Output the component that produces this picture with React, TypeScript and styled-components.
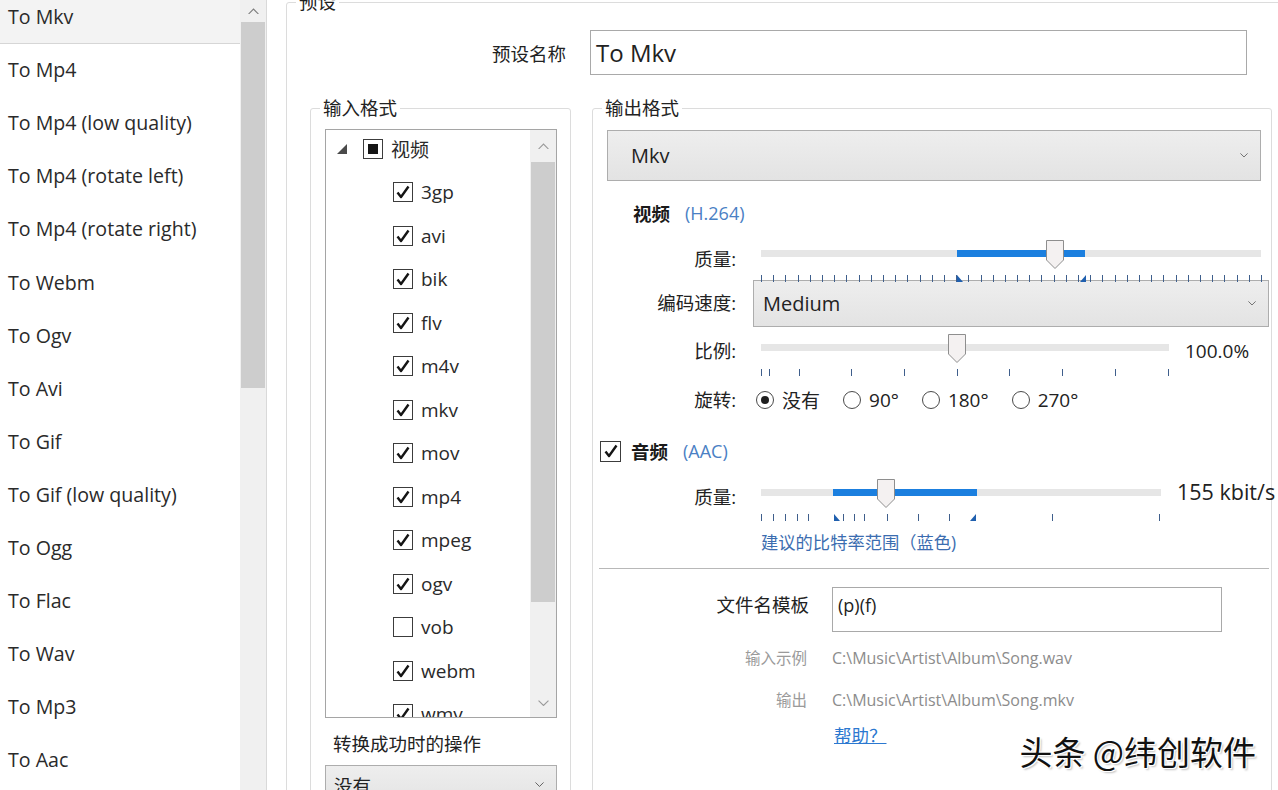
import styled, { createGlobalStyle } from "styled-components";

const GlobalStyle = createGlobalStyle`
  html, body {
    margin: 0;
    padding: 0;
    background: #fff;
    overflow: hidden;
  }
  body {
    font-family: "Open Sans", "Noto Sans CJK SC", sans-serif;
    color: #222;
  }
  * {
    box-sizing: border-box;
  }
`;

const Page = styled.div`
  position: relative;
  display: flex;
  width: 1278px;
  height: 790px;
  overflow: hidden;
`;

/* ---------- left preset list ---------- */

const Sidebar = styled.div`
  display: flex;
  flex: none;
  width: 267px;
  height: 790px;
  border-right: 1px solid #d9d9d9;
`;

const PresetList = styled.ul`
  list-style: none;
  margin: -9.5px 0 0;
  padding: 0;
  width: 240px;
  flex: none;
`;

const PresetItem = styled.li<{ $active?: boolean }>`
  display: flex;
  align-items: center;
  height: 53.1px;
  padding-left: 8px;
  font-size: 19.6px;
  color: #2a2a2a;
  white-space: nowrap;
  background: ${(p) => (p.$active ? "#f3f3f3" : "transparent")};
  border-bottom: 1px solid ${(p) => (p.$active ? "#d6d6d6" : "transparent")};
`;

const ScrollTrack = styled.div`
  display: flex;
  flex-direction: column;
  align-items: center;
  flex: none;
  width: 26px;
  background: #f0f0f0;
`;

const ScrollArrow = styled.div<{ $h: number }>`
  display: flex;
  align-items: center;
  justify-content: center;
  width: 100%;
  height: ${(p) => p.$h}px;
  flex: none;
  color: #8a8a8a;
`;

const ScrollThumb = styled.div<{ $h: number }>`
  width: 24px;
  height: ${(p) => p.$h}px;
  flex: none;
  background: #cdcdcd;
`;

const ScrollSpacer = styled.div`
  flex: 1;
`;

/* ---------- group boxes ---------- */

const Group = styled.fieldset<{ $w: number }>`
  flex: none;
  width: ${(p) => p.$w}px;
  min-width: 0;
  margin: 0;
  padding: 0;
  border: 1px solid #dcdcdc;
  border-radius: 3px;
`;

const MainGroup = styled(Group)`
  margin: -9px 0 0 19px;
  height: 840px;
`;

const GroupTitle = styled.legend`
  margin-left: 9px;
  padding: 0 3px;
  font-size: 18.5px;
  line-height: 22px;
  color: #222;
`;

const MainBody = styled.div`
  padding-top: 17px;
`;

const NameRow = styled.div`
  display: flex;
  align-items: center;
  gap: 24px;
`;

const NameLabel = styled.label`
  width: 279px;
  text-align: right;
  font-size: 18.5px;
`;

const TextBox = styled.div<{ $w: number; $h: number }>`
  width: ${(p) => p.$w}px;
  height: ${(p) => p.$h}px;
  border: 1px solid #a9a9a9;
  background: #fff;
`;

const NameInput = styled(TextBox)`
  display: flex;
  align-items: center;
  padding-left: 5px;
  font-size: 24px;
  color: #222;
`;

const Columns = styled.div`
  display: flex;
  align-items: flex-start;
  gap: 21px;
  margin-top: 22px;
  padding-left: 23px;
`;

const ColumnGroup = styled(Group)`
  height: 760px;
`;

/* ---------- input formats ---------- */

const InputBody = styled.div`
  padding: 10px 13px 0 14px;
`;

const ListBox = styled.div`
  display: flex;
  height: 589px;
  border: 1px solid #a5a5a5;
  overflow: hidden;
`;

const TreeArea = styled.div`
  flex: 1;
  overflow: hidden;
`;

const TreeInner = styled.div`
  margin-top: -3px;
`;

const TreeRow = styled.div<{ $indent: number }>`
  display: flex;
  align-items: center;
  height: 43.5px;
  padding-left: ${(p) => p.$indent}px;
  gap: 8px;
  font-size: 19px;
  color: #2a2a2a;
`;

const Expander = styled.svg`
  margin-right: 8px;
`;

const CheckBox = styled.span<{ $size?: number }>`
  display: inline-flex;
  align-items: center;
  justify-content: center;
  flex: none;
  width: ${(p) => p.$size ?? 20}px;
  height: ${(p) => p.$size ?? 20}px;
  border: 1px solid #3c3c3c;
  background: #fff;
`;

const Indeterminate = styled.span`
  width: 10px;
  height: 10px;
  background: #151515;
`;

const ActionLabel = styled.div`
  margin-top: 14px;
  padding-left: 8px;
  font-size: 18.5px;
  line-height: 24px;
`;

const DropDown = styled.div<{ $w: number; $h: number; $pl: number }>`
  display: flex;
  align-items: center;
  justify-content: space-between;
  flex: none;
  width: ${(p) => p.$w}px;
  height: ${(p) => p.$h}px;
  padding: 0 12px 0 ${(p) => p.$pl}px;
  border: 1px solid #adadad;
  background: linear-gradient(#eeeeee, #e3e3e3);
  font-size: 20px;
  color: #222;
`;

const ActionSelect = styled(DropDown)`
  margin-top: 9px;
  font-size: 18.5px;
`;

/* ---------- output format ---------- */

const OutputBody = styled.div`
  padding: 11px 10px 0 14px;
`;

const SectionHead = styled.div<{ $mt: number; $ml: number }>`
  display: flex;
  align-items: center;
  gap: 10px;
  height: 26px;
  margin-top: ${(p) => p.$mt}px;
  margin-left: ${(p) => p.$ml}px;
`;

const SectionTitle = styled.span`
  font-size: 18.5px;
  font-weight: 700;
  color: #1a1a1a;
`;

const Codec = styled.span`
  margin-left: 5px;
  font-size: 18px;
  color: #4a80c4;
`;

const FormRow = styled.div<{ $mt?: number; $gap?: number }>`
  display: flex;
  align-items: flex-start;
  gap: ${(p) => p.$gap ?? 17}px;
  margin-top: ${(p) => p.$mt ?? 0}px;
`;

const FieldLabel = styled.span<{ $mt?: number; $w?: number }>`
  flex: none;
  width: ${(p) => p.$w ?? 129}px;
  margin-top: ${(p) => p.$mt ?? 0}px;
  text-align: right;
  font-size: 18.5px;
  line-height: 26px;
  color: #222;
`;

const SideValue = styled.span<{ $mt: number; $size: number }>`
  margin: ${(p) => p.$mt}px 0 0 -9px;
  font-size: ${(p) => p.$size}px;
  line-height: 26px;
  white-space: nowrap;
`;

const SliderBox = styled.div<{ $w: number }>`
  position: relative;
  flex: none;
  width: ${(p) => p.$w + 16}px;
  height: 41px;
`;

const SliderTrack = styled.div`
  position: absolute;
  left: 8px;
  right: 8px;
  top: 11px;
  height: 7px;
  background: #e6e6e6;
`;

const SliderRange = styled.div`
  position: absolute;
  top: 0;
  bottom: 0;
  background: #1b7fdf;
`;

const SliderThumb = styled.svg`
  position: absolute;
  top: 0;
  margin-left: -10px;
`;

const Tick = styled.span`
  position: absolute;
  top: 36px;
  width: 1px;
  height: 7px;
  background: #3f5f8c;
`;

const TickMark = styled.svg`
  position: absolute;
  top: 36px;
`;

const RadioGroup = styled.div`
  display: flex;
  align-items: center;
  gap: 23px;
  height: 26px;
  margin-left: 3px;
`;

const RadioItem = styled.label`
  display: flex;
  align-items: center;
  gap: 8px;
  font-size: 19px;
  color: #222;
`;

const RadioDot = styled.span<{ $on?: boolean }>`
  display: inline-flex;
  align-items: center;
  justify-content: center;
  width: 18px;
  height: 18px;
  border-radius: 50%;
  border: 1px solid #4a4a4a;
  background: #fff;
  &::after {
    content: "";
    width: 8px;
    height: 8px;
    border-radius: 50%;
    background: ${(p) => (p.$on ? "#1e1e1e" : "transparent")};
  }
`;

const Hint = styled.div`
  margin-top: 11px;
  padding-left: 154px;
  font-size: 17.3px;
  line-height: 26px;
  color: #3c6db0;
`;

const Separator = styled.hr`
  margin: 12px -8px 0 -8px;
  border: 0;
  height: 1px;
  background: #b8b8b8;
`;

const TemplateInput = styled(TextBox)`
  padding: 4px 5px;
  font-size: 18px;
  line-height: 26px;
`;

const MutedLabel = styled(FieldLabel)`
  font-size: 15.5px;
  color: #9a9a9a;
`;

const PathText = styled.span`
  margin-left: 8px;
  font-size: 16px;
  line-height: 26px;
  color: #8c8c8c;
`;

const HelpLink = styled.a`
  display: block;
  margin-top: 9px;
  padding-left: 227px;
  font-size: 17.5px;
  line-height: 26px;
  color: #2b78d0;
  text-decoration: underline;
`;

const Watermark = styled.div`
  position: absolute;
  right: 22px;
  top: 727px;
  font-family: "Noto Sans CJK SC", sans-serif;
  font-size: 33px;
  color: #111;
  text-shadow: 1px 1px 0 #fff, -1px -1px 0 #fff, 1px -1px 0 #fff, -1px 1px 0 #fff,
    2px 2px 2px rgba(0, 0, 0, 0.25);
  white-space: nowrap;
`;

/* ---------- small drawings ---------- */

function Chevron({ up, size = 10, color = "#7d7d7d" }: { up?: boolean; size?: number; color?: string }) {
  return (
    <svg width={size} height={size * 0.6} viewBox="0 0 10 6">
      <path
        d={up ? "M0.5 5.5 L5 1 L9.5 5.5" : "M0.5 0.5 L5 5 L9.5 0.5"}
        fill="none"
        stroke={color}
        strokeWidth="1"
      />
    </svg>
  );
}

function Check() {
  return (
    <svg width="16" height="16" viewBox="0 0 16 16">
      <path
        d="M2.5 8.5 L6 13 L13.5 2.5"
        fill="none"
        stroke="#141414"
        strokeWidth="2.4"
        strokeLinejoin="round"
      />
    </svg>
  );
}

function CheckItem({ checked, label }: { checked: boolean; label: string }) {
  return (
    <TreeRow $indent={67}>
      <CheckBox>{checked ? <Check /> : null}</CheckBox>
      <span>{label}</span>
    </TreeRow>
  );
}

type SliderProps = {
  width: number;
  value: number;
  range?: [number, number];
  ticks: number[];
  marks?: number[];
};

function Slider({ width, value, range, ticks, marks = [] }: SliderProps) {
  const at = (f: number) => 8 + f * width;
  return (
    <SliderBox $w={width}>
      <SliderTrack>
        {range ? (
          <SliderRange
            style={{ left: range[0] * width, width: (range[1] - range[0]) * width }}
          />
        ) : null}
      </SliderTrack>
      {ticks.map((t, i) => (
        <Tick key={i} style={{ left: Math.round(at(t)) }} />
      ))}
      {marks.map((m, i) => (
        <TickMark
          key={"m" + i}
          width="6"
          height="7"
          viewBox="0 0 6 7"
          style={{ left: Math.round(at(m)) - (i === 0 ? 0 : 5) }}
        >
          <path d={i === 0 ? "M0 0 L0 7 L6 7 Z" : "M6 0 L6 7 L0 7 Z"} fill="#1f5fae" />
        </TickMark>
      ))}
      <SliderThumb width="20" height="31" viewBox="0 0 20 31" style={{ left: at(value) }}>
        <path
          d="M1.5 1.5 H18.5 V21 L10 29.5 L1.5 21 Z"
          fill="#f4f1f1"
          stroke="#8e8e8e"
          strokeWidth="1"
        />
      </SliderThumb>
    </SliderBox>
  );
}

const presets = [
  "To Mkv",
  "To Mp4",
  "To Mp4 (low quality)",
  "To Mp4 (rotate left)",
  "To Mp4 (rotate right)",
  "To Webm",
  "To Ogv",
  "To Avi",
  "To Gif",
  "To Gif (low quality)",
  "To Ogg",
  "To Flac",
  "To Wav",
  "To Mp3",
  "To Aac",
];

const formats: [string, boolean][] = [
  ["3gp", true],
  ["avi", true],
  ["bik", true],
  ["flv", true],
  ["m4v", true],
  ["mkv", true],
  ["mov", true],
  ["mp4", true],
  ["mpeg", true],
  ["ogv", true],
  ["vob", false],
  ["webm", true],
  ["wmv", true],
];

const qualityTicks = Array.from({ length: 42 }, (_, i) => i / 41);
const scaleTicks = [0, 0.02, 0.093, 0.221, 0.35, 0.48, 0.608, 0.738, 0.868, 0.998];
const audioTicks = [
  0, 0.03, 0.06, 0.09, 0.1175, 0.205, 0.2325, 0.2575, 0.315, 0.3925, 0.47, 0.7275, 0.995,
];

export default function App() {
  return (
    <Page>
      <GlobalStyle />
      <Sidebar>
        <PresetList>
          {presets.map((p, i) => (
            <PresetItem key={p} $active={i === 0}>
              {p}
            </PresetItem>
          ))}
        </PresetList>
        <ScrollTrack>
          <ScrollArrow $h={22}>
            <Chevron up size={11} />
          </ScrollArrow>
          <ScrollThumb $h={366} />
          <ScrollSpacer />
        </ScrollTrack>
      </Sidebar>

      <MainGroup $w={1010}>
        <GroupTitle>预设</GroupTitle>
        <MainBody>
          <NameRow>
            <NameLabel>预设名称</NameLabel>
            <NameInput $w={657} $h={45}>
              To Mkv
            </NameInput>
          </NameRow>

          <Columns>
            <ColumnGroup $w={261}>
              <GroupTitle>输入格式</GroupTitle>
              <InputBody>
                <ListBox>
                  <TreeArea>
                    <TreeInner>
                      <TreeRow $indent={11}>
                        <Expander width="10" height="10" viewBox="0 0 10 10">
                          <path d="M0 10 L10 10 L10 0 Z" fill="#4a4a4a" />
                        </Expander>
                        <CheckBox>
                          <Indeterminate />
                        </CheckBox>
                        <span>视频</span>
                      </TreeRow>
                      {formats.map(([f, c]) => (
                        <CheckItem key={f} label={f} checked={c} />
                      ))}
                    </TreeInner>
                  </TreeArea>
                  <ScrollTrack>
                    <ScrollArrow $h={32}>
                      <Chevron up size={11} color="#9a9a9a" />
                    </ScrollArrow>
                    <ScrollThumb $h={440} />
                    <ScrollSpacer />
                    <ScrollArrow $h={28}>
                      <Chevron size={11} color="#9a9a9a" />
                    </ScrollArrow>
                  </ScrollTrack>
                </ListBox>
                <ActionLabel>转换成功时的操作</ActionLabel>
                <ActionSelect $w={232} $h={40} $pl={8}>
                  <span>没有</span>
                  <Chevron size={9} color="#555" />
                </ActionSelect>
              </InputBody>
            </ColumnGroup>

            <ColumnGroup $w={680}>
              <GroupTitle>输出格式</GroupTitle>
              <OutputBody>
                <DropDown $w={654} $h={51} $pl={23}>
                  <span>Mkv</span>
                  <Chevron size={8} color="#555" />
                </DropDown>

                <SectionHead $mt={19} $ml={26}>
                  <SectionTitle>视频</SectionTitle>
                  <Codec>(H.264)</Codec>
                </SectionHead>

                <FormRow $mt={13}>
                  <FieldLabel $mt={7}>质量:</FieldLabel>
                  <Slider
                    width={500}
                    value={0.588}
                    range={[0.392, 0.648]}
                    ticks={qualityTicks}
                    marks={[0.392, 0.648]}
                  />
                </FormRow>

                <FormRow>
                  <FieldLabel $mt={10}>编码速度:</FieldLabel>
                  <DropDown $w={516} $h={47} $pl={9}>
                    <span>Medium</span>
                    <Chevron size={8} color="#555" />
                  </DropDown>
                </FormRow>

                <FormRow $mt={6}>
                  <FieldLabel $mt={5}>比例:</FieldLabel>
                  <Slider width={408} value={0.48} ticks={scaleTicks} />
                  <SideValue $mt={5} $size={19}>
                    100.0%
                  </SideValue>
                </FormRow>

                <FormRow $mt={13}>
                  <FieldLabel>旋转:</FieldLabel>
                  <RadioGroup>
                    <RadioItem>
                      <RadioDot $on />
                      没有
                    </RadioItem>
                    <RadioItem>
                      <RadioDot />
                      90°
                    </RadioItem>
                    <RadioItem>
                      <RadioDot />
                      180°
                    </RadioItem>
                    <RadioItem>
                      <RadioDot />
                      270°
                    </RadioItem>
                  </RadioGroup>
                </FormRow>

                <SectionHead $mt={25} $ml={-7}>
                  <CheckBox $size={21}>
                    <Check />
                  </CheckBox>
                  <SectionTitle>音频</SectionTitle>
                  <Codec>(AAC)</Codec>
                </SectionHead>

                <FormRow $mt={14}>
                  <FieldLabel $mt={6}>质量:</FieldLabel>
                  <Slider
                    width={400}
                    value={0.3125}
                    range={[0.18, 0.54]}
                    ticks={audioTicks}
                    marks={[0.1825, 0.535]}
                  />
                  <SideValue $mt={1} $size={21.5}>
                    155 kbit/s
                  </SideValue>
                </FormRow>

                <Hint>建议的比特率范围（蓝色)</Hint>

                <Separator />

                <FormRow $mt={18} $gap={23}>
                  <FieldLabel $w={202} $mt={5}>
                    文件名模板
                  </FieldLabel>
                  <TemplateInput $w={390} $h={45}>
                    (p)(f)
                  </TemplateInput>
                </FormRow>

                <FormRow $mt={13}>
                  <MutedLabel $w={200}>输入示例</MutedLabel>
                  <PathText>C:\Music\Artist\Album\Song.wav</PathText>
                </FormRow>

                <FormRow $mt={16}>
                  <MutedLabel $w={200}>输出</MutedLabel>
                  <PathText>C:\Music\Artist\Album\Song.mkv</PathText>
                </FormRow>

                <HelpLink>帮助？</HelpLink>
              </OutputBody>
            </ColumnGroup>
          </Columns>
        </MainBody>
      </MainGroup>

      <Watermark>头条 @纬创软件</Watermark>
    </Page>
  );
}
